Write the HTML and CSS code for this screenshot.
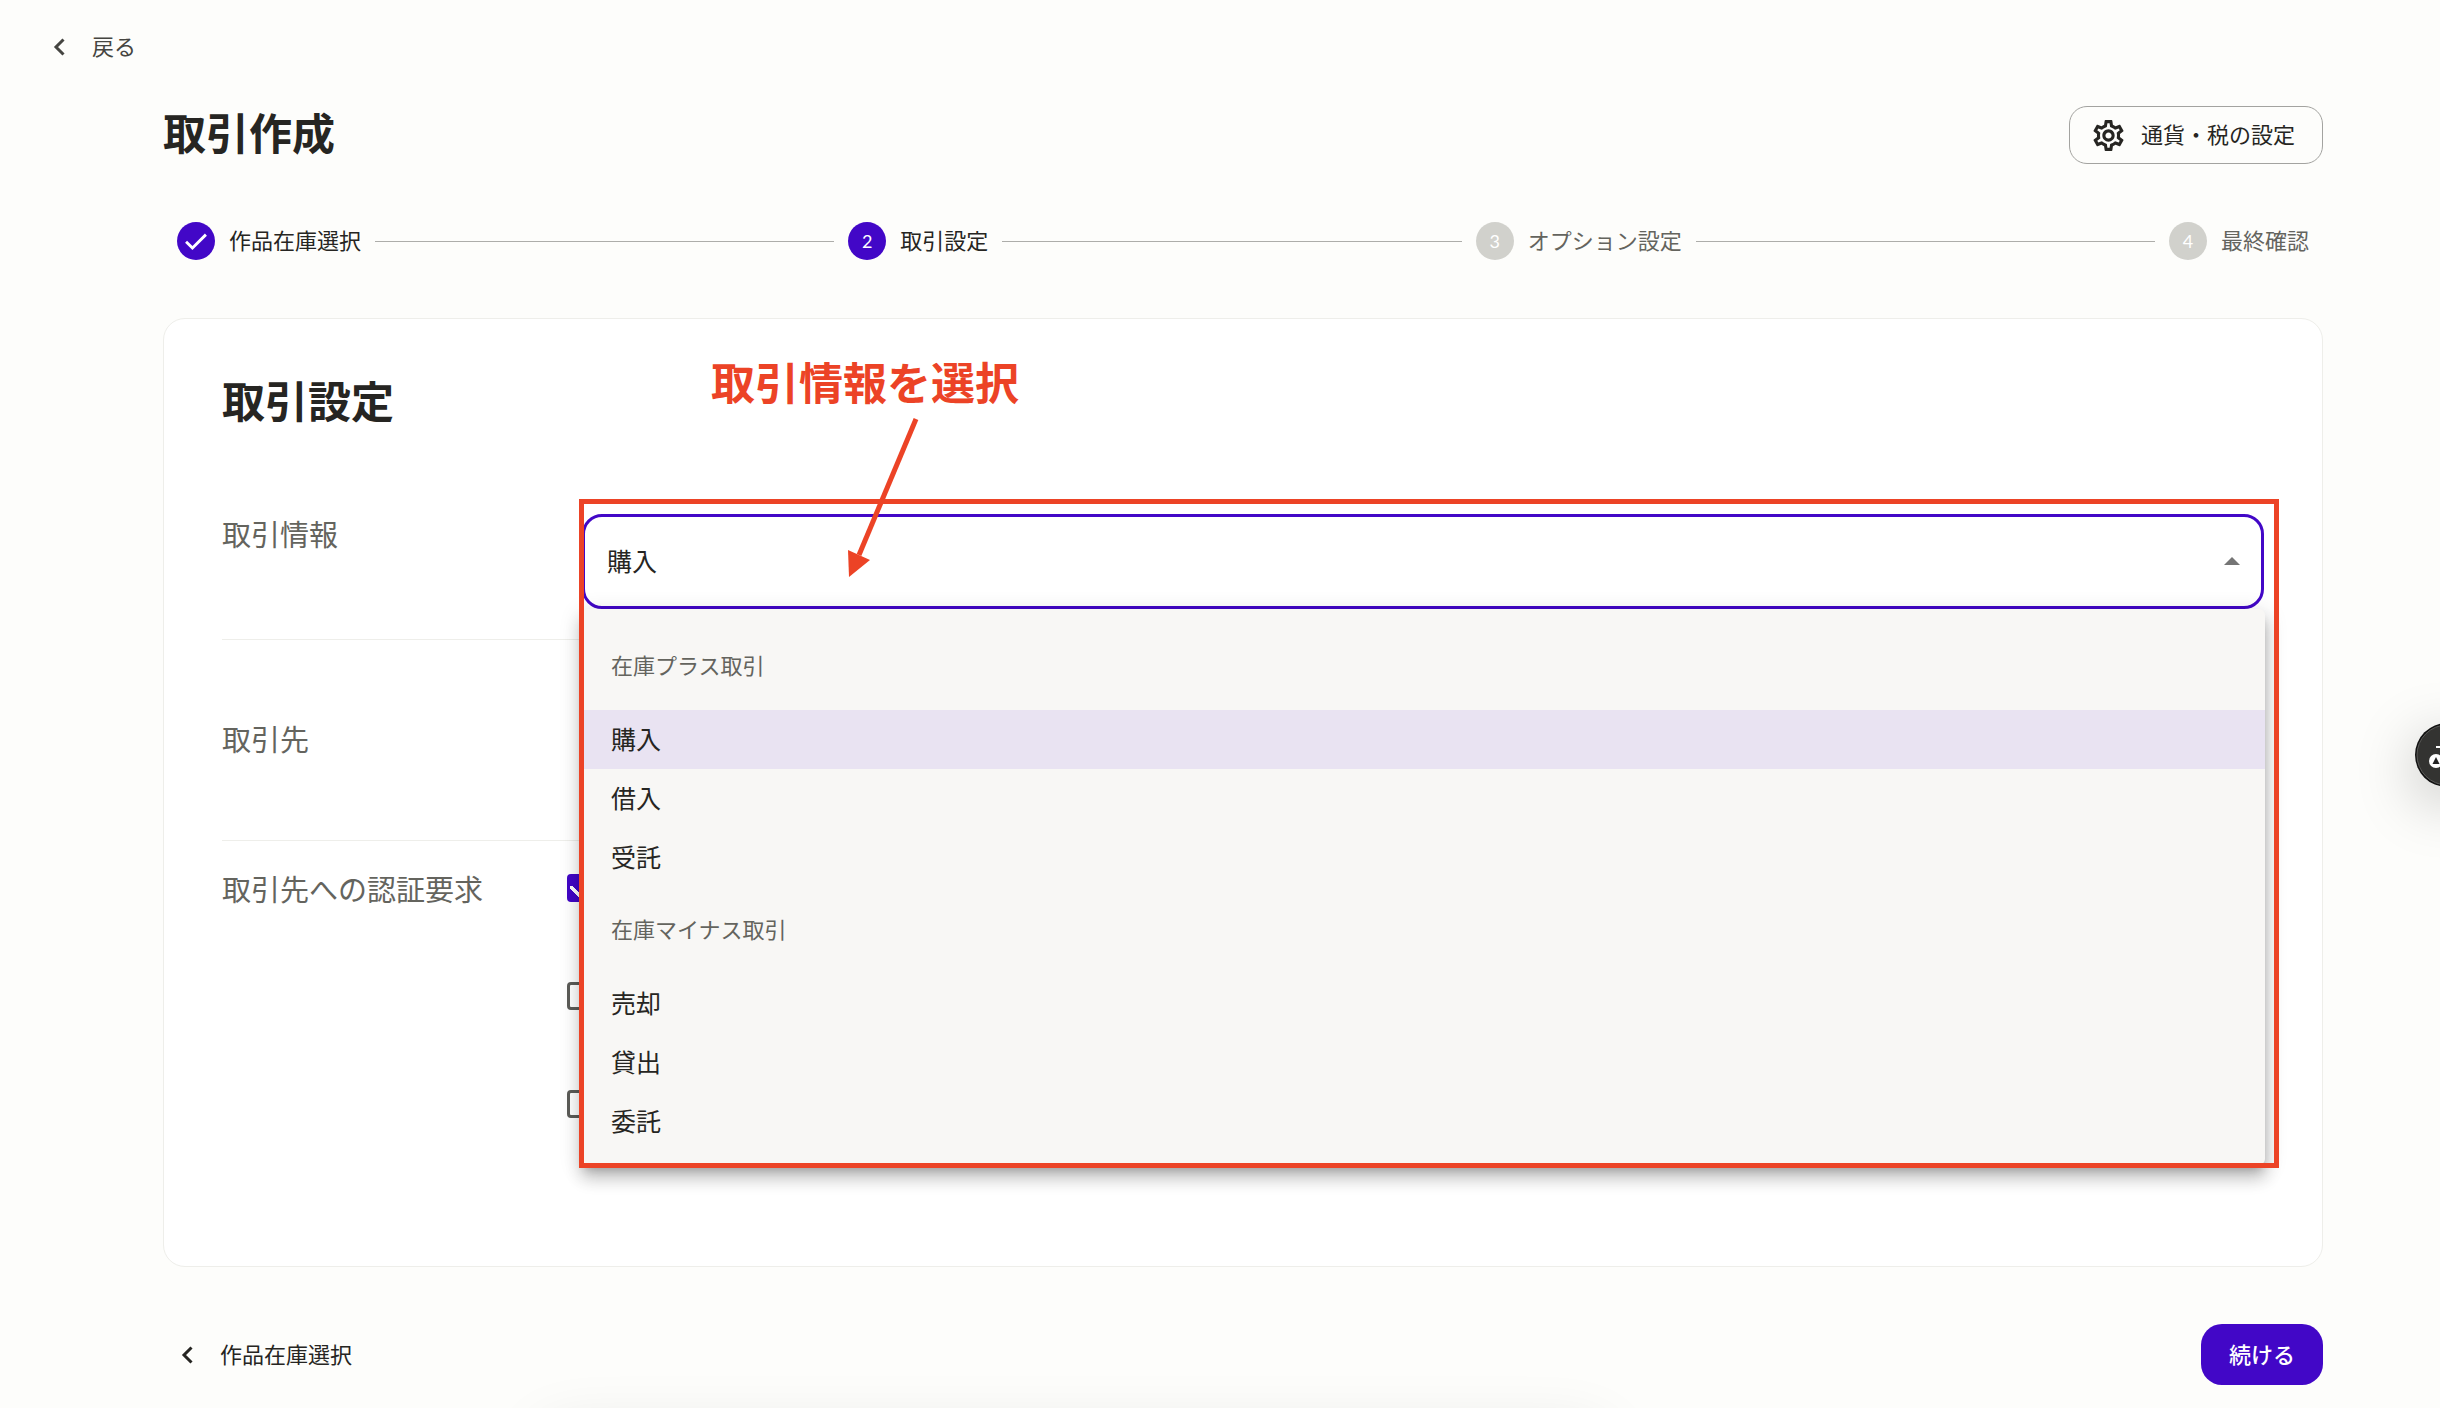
FILE: index.html
```
<!DOCTYPE html>
<html lang="ja">
<head>
    <meta charset="UTF-8">
    <meta name="viewport" content="width=device-width, initial-scale=1.0">
    <title>取引作成</title>
    <link rel="stylesheet" href="styles.css">
</head>
<body>
    <nav class="top-nav">
        <a class="back-link" href="#">
            <svg class="chevron" viewBox="0 0 12 18"><path d="M10.500 1.500L3 9l7.500 7.500"/></svg>
            <span class="label">戻る</span>
        </a>
    </nav>

    <main class="container">
        <header class="page-header">
            <h1>取引作成</h1>
            <button class="settings-btn" type="button">
                <svg class="gear" viewBox="0 0 24 24"><path d="M19.43 12.98c.04-.32.07-.64.07-.98 0-.34-.03-.66-.07-.98l2.11-1.65c.19-.15.24-.42.12-.64l-2-3.46c-.09-.16-.26-.25-.44-.25-.06 0-.12.01-.17.03l-2.49 1c-.52-.4-1.08-.73-1.69-.98l-.38-2.65C14.46 2.18 14.25 2 14 2h-4c-.25 0-.46.18-.49.42l-.38 2.65c-.61.25-1.17.59-1.69.98l-2.49-1c-.06-.02-.12-.03-.18-.03-.17 0-.34.09-.43.25l-2 3.46c-.13.22-.07.49.12.64l2.11 1.65c-.04.32-.07.65-.07.98s.03.66.07.98l-2.11 1.65c-.19.15-.24.42-.12.64l2 3.46c.09.16.26.25.44.25.06 0 .12-.01.17-.03l2.49-1c.52.4 1.08.73 1.69.98l.38 2.65c.03.24.24.42.49.42h4c.25 0 .46-.18.49-.42l.38-2.65c.61-.25 1.17-.59 1.69-.98l2.49 1c.06.02.12.03.18.03.17 0 .34-.09.43-.25l2-3.46c.12-.22.07-.49-.12-.64l-2.11-1.65zm-1.98-1.71c.04.31.05.52.05.73 0 .21-.02.43-.05.73l-.14 1.13.89.7 1.08.84-.7 1.21-1.27-.51-1.04-.42-.9.68c-.43.32-.84.56-1.25.73l-1.06.43-.16 1.13-.2 1.35h-1.4l-.19-1.35-.16-1.13-1.06-.43c-.43-.18-.83-.41-1.23-.71l-.91-.7-1.06.43-1.27.51-.7-1.21 1.08-.84.89-.7-.14-1.13c-.03-.31-.05-.54-.05-.74s.02-.43.05-.73l.14-1.13-.89-.7-1.08-.84.7-1.21 1.27.51 1.04.42.9-.68c.43-.32.84-.56 1.25-.73l1.06-.43.16-1.13.2-1.35h1.39l.19 1.35.16 1.13 1.06.43c.43.18.83.41 1.23.71l.91.7 1.06-.43 1.27-.51.7 1.21-1.07.85-.89.7.14 1.13zM12 8c-2.21 0-4 1.79-4 4s1.79 4 4 4 4-1.79 4-4-1.79-4-4-4zm0 6c-1.1 0-2-.9-2-2s.9-2 2-2 2 .9 2 2-.9 2-2 2z"/></svg>
                <span class="label">通貨・税の設定</span>
            </button>
        </header>

        <ol class="stepper">
            <li class="step done">
                <span class="step-icon"><svg viewBox="0 0 24 24"><path d="M5 12.500l4.500 4.500L19 7.500"/></svg></span>
                <span class="label">作品在庫選択</span>
            </li>
            <li class="step-line"></li>
            <li class="step active"><span class="step-icon">2</span><span class="label">取引設定</span></li>
            <li class="step-line"></li>
            <li class="step"><span class="step-icon">3</span><span class="label">オプション設定</span></li>
            <li class="step-line"></li>
            <li class="step"><span class="step-icon">4</span><span class="label">最終確認</span></li>
        </ol>

        <section class="card">
            <h2>取引設定</h2>

            <div class="form-row">
                <label class="row-label" for="dealType">取引情報</label>
                <div class="select-wrap">
                    <select id="dealType" class="deal-select">
                        <option>購入</option>
                        <option>借入</option>
                        <option>受託</option>
                        <option>売却</option>
                        <option>貸出</option>
                        <option>委託</option>
                    </select>
                    <svg class="select-arrow" viewBox="0 0 16 8"><path d="M0 8l8-8 8 8z"/></svg>

                    <div class="menu">
                        <div class="menu-group">在庫プラス取引</div>
                        <button class="menu-item selected" type="button">購入</button>
                        <button class="menu-item" type="button">借入</button>
                        <button class="menu-item" type="button">受託</button>
                        <div class="menu-group">在庫マイナス取引</div>
                        <button class="menu-item" type="button">売却</button>
                        <button class="menu-item" type="button">貸出</button>
                        <button class="menu-item" type="button">委託</button>
                    </div>

                    <div class="note-frame"></div>
                    <div class="note-text">取引情報を選択</div>
                    <svg class="note-arrow" viewBox="0 0 80 160"><path d="M69 1L12 137" fill="none" stroke="#ec4326" stroke-width="5"/><path d="M1 132l22 10L2 159z" fill="#ec4326"/></svg>
                </div>
            </div>

            <div class="form-row">
                <span class="row-label">取引先</span>
            </div>

            <div class="form-row check-row">
                <span class="row-label">取引先への認証要求</span>
                <div class="checks">
                    <input type="checkbox" aria-label="認証要求 1" checked>
                    <input type="checkbox" aria-label="認証要求 2">
                    <input type="checkbox" aria-label="認証要求 3">
                </div>
            </div>
        </section>

        <footer class="page-footer">
            <a class="prev-link" href="#">
                <svg class="chevron" viewBox="0 0 12 18"><path d="M10.500 1.500L3 9l7.500 7.500"/></svg>
                <span class="label">作品在庫選択</span>
            </a>
            <button class="next-btn" type="button">続ける</button>
        </footer>
    </main>

    <button class="lang-btn" type="button" aria-label="言語">
        <svg viewBox="0 0 64 64">
            <circle cx="32" cy="32" r="32" fill="#111"/>
            <circle cx="32" cy="32" r="30" fill="#333331" stroke="#5a5a58" stroke-width="1"/>
            <path d="M21 24h22" stroke="#fff" stroke-width="2"/>
            <circle cx="21" cy="38" r="7" fill="#fff"/>
            <path d="M17.500 41l3.500-7 3.500 7z" fill="#222"/>
        </svg>
    </button>
    <div class="bottom-bar"></div>
</body>
</html>
```

FILE: styles.css
```
:root {
    --primary: #4207c7;
    --text: #262522;
    --text-sub: #64645e;
    --border: #eeeeea;
    --note: #ec4326;
}

* {
    box-sizing: border-box;
}

body {
    margin: 0;
    min-height: 100vh;
    background-color: #fdfdfb;
    color: var(--text);
    font-family: "Noto Sans CJK JP", sans-serif;
    font-size: 22px;
    line-height: 32px;
    overflow: hidden;
}

button, select {
    font: inherit;
    color: inherit;
}

a {
    color: inherit;
    text-decoration: none;
}

/* the CJK face sits low in its line box */
.label {
    margin-top: -4px;
}

.top-nav {
    display: flex;
    align-items: center;
    height: 63px;
    padding: 31px 53px 0;
}

.back-link, .prev-link {
    display: flex;
    align-items: center;
    gap: 27px;
}

.back-link {
    color: #454541;
}

.chevron {
    width: 12px;
    height: 18px;
    fill: none;
    stroke: currentColor;
    stroke-width: 3;
}

.container {
    padding: 43px 117px 0 163px;
}

.page-header {
    display: flex;
    justify-content: space-between;
    align-items: flex-start;
}

h1, h2 {
    margin: 0;
    font-size: 43px;
    line-height: 50px;
    font-weight: 700;
}

.settings-btn {
    display: flex;
    align-items: center;
    gap: 14px;
    height: 58px;
    padding: 0 27px 0 20px;
    border: 1px solid #a3a3a0;
    border-radius: 18px;
    background: none;
}

.gear {
    width: 37px;
    height: 37px;
    fill: var(--text);
}

.stepper {
    display: flex;
    align-items: center;
    gap: 14px;
    margin: 58px 0 0;
    padding: 0 14px;
    list-style: none;
}

.step {
    display: flex;
    align-items: center;
    gap: 14px;
    color: var(--text-sub);
}

.step.done, .step.active {
    color: var(--text);
}

.step-icon {
    display: flex;
    align-items: center;
    justify-content: center;
    width: 38px;
    height: 38px;
    border-radius: 50%;
    background-color: #d1d1cc;
    color: #fff;
    font-family: Lato, sans-serif;
    font-size: 18px;
}

.step.done .step-icon, .step.active .step-icon {
    background-color: var(--primary);
}

.step-icon svg {
    width: 34px;
    height: 34px;
    fill: none;
    stroke: #fff;
    stroke-width: 2;
}

.step-line {
    flex: 1;
    height: 1px;
    background-color: #adadaa;
}

.card {
    margin-top: 58px;
    padding: 55px 58px 148px;
    border: 1px solid var(--border);
    border-radius: 22px;
    background-color: #fff;
}

.form-row {
    display: flex;
    align-items: flex-start;
    min-height: 201px;
    padding-top: 79px;
    border-bottom: 1px solid var(--border);
}

h2 + .form-row {
    padding-top: 90px;
    min-height: 216px;
}

.check-row {
    min-height: 0;
    padding-top: 28px;
    border-bottom: none;
}

.row-label {
    width: 360px;
    font-size: 29px;
    line-height: 38px;
    color: var(--text-sub);
}

.select-wrap {
    position: relative;
    flex: 1;
}

.deal-select {
    display: block;
    width: 100%;
    height: 95px;
    padding: 0 22px 4px;
    border: 3px solid var(--primary);
    border-radius: 20px;
    background-color: #fff;
    font-size: 25px;
    appearance: none;
}

.select-arrow {
    position: absolute;
    top: 43px;
    right: 24px;
    width: 16px;
    height: 8px;
    fill: #757575;
}

.menu {
    position: absolute;
    top: 95px;
    left: 0;
    right: -1px;
    z-index: 1;
    padding: 14px 0;
    border-radius: 6px;
    background-color: #f8f7f5;
    box-shadow: 0 8px 10px -4px rgba(0, 0, 0, 0.24), 0 13px 16px 2px rgba(0, 0, 0, 0.16), 0 5px 21px 3px rgba(0, 0, 0, 0.12);
}

.menu-group {
    height: 87px;
    padding: 0 29px;
    line-height: 83px;
    color: var(--text-sub);
}

.menu-item {
    display: block;
    width: 100%;
    height: 59px;
    padding: 0 29px 3px;
    border: none;
    background: none;
    font-size: 25px;
    text-align: left;
}

.menu-item.selected {
    background-color: #e9e3f2;
}

/* annotation over the select and its menu */
.note-frame {
    position: absolute;
    top: -15px;
    left: -3px;
    right: -15px;
    z-index: 2;
    height: 669px;
    border: 5px solid var(--note);
    pointer-events: none;
}

.note-text {
    position: absolute;
    top: -162px;
    left: 129px;
    font-size: 44px;
    line-height: 58px;
    font-weight: 700;
    color: var(--note);
}

.note-arrow {
    position: absolute;
    top: -96px;
    left: 265px;
    z-index: 3;
    width: 80px;
    height: 160px;
}

.checks {
    display: flex;
    flex-direction: column;
    gap: 80px;
    margin: 5px 0 0 -15px;
}

.checks input {
    width: 28px;
    height: 28px;
    margin: 0;
    border: 3px solid #5c5c58;
    border-radius: 4px;
    appearance: none;
}

.checks input:checked {
    border-color: var(--primary);
    background: linear-gradient(45deg, transparent 40%, #fff 40%, #fff 60%, transparent 60%) 0 9px / 12px 12px no-repeat var(--primary);
}

.page-footer {
    display: flex;
    justify-content: space-between;
    align-items: center;
    margin-top: 57px;
    padding-left: 18px;
}

.next-btn {
    height: 61px;
    padding: 0 28px 3px;
    border: none;
    border-radius: 21px;
    background-color: var(--primary);
    color: #fff;
    font-weight: 500;
}

.lang-btn {
    position: fixed;
    top: 723px;
    right: -39px;
    width: 64px;
    height: 64px;
    padding: 0;
    border: none;
    border-radius: 50%;
    background: none;
    box-shadow: 0 15px 60px rgba(0, 0, 0, 0.25);
}

.lang-btn svg {
    display: block;
}

.bottom-bar {
    position: fixed;
    bottom: -80px;
    left: 22%;
    right: 34%;
    height: 60px;
    border-radius: 30px;
    box-shadow: 0 0 60px rgba(0, 0, 0, 0.1);
}
```
